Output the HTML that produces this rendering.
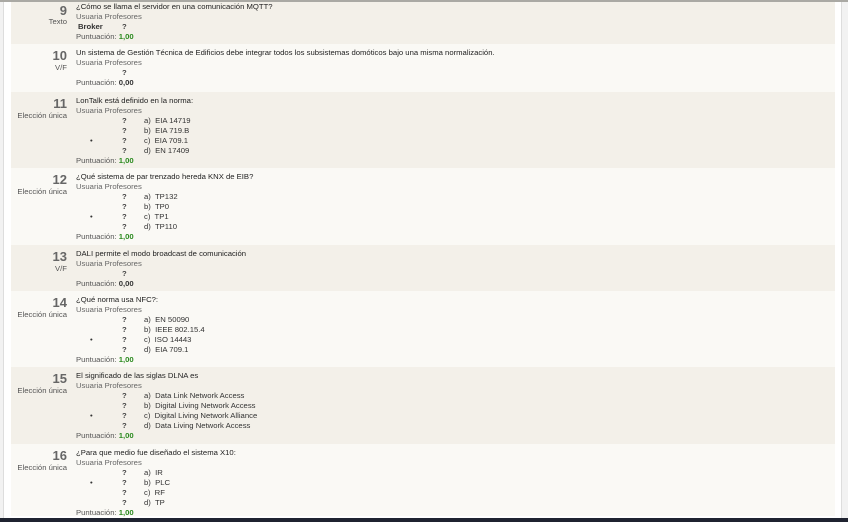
<!DOCTYPE html>
<html><head><meta charset="utf-8"><style>
html,body{margin:0;padding:0}
body{width:848px;height:522px;position:relative;overflow:hidden;background:#fff;font-family:"Liberation Sans",sans-serif;font-size:7.7px;color:#333}
.top{position:absolute;left:0;top:0;width:848px;height:2px;background:#aaa9a4}
.lg{position:absolute;left:0;top:2px;width:3px;height:516px;background:#f2f2f2;border-right:1px solid #ddd}
.rg{position:absolute;left:841px;top:2px;width:7px;height:516px;background:#f2f2f2;border-left:1px solid #ddd}
.bot{position:absolute;left:0;top:518px;width:848px;height:4px;background:#1f2330}
.row{position:absolute;left:11px;width:824px;box-sizing:border-box}
.d{background:#f3f0e9}.l{background:#faf9f5}
.num{position:absolute;left:0;width:56px;text-align:right;font-size:13px;font-weight:bold;color:#666;line-height:14px}
.typ{position:absolute;left:0;width:56px;text-align:right;color:#555;line-height:10px}
.c{position:absolute;left:65px;width:740px;line-height:10px;white-space:nowrap}
.t{color:#222}
.u{color:#666}
.p{color:#555}.p b{color:#2a8a1e}.p b.z{color:#333}
.o{position:relative;height:10px}
.o span,.o b{white-space:nowrap}
.o .b{position:absolute;left:14px}
.o .q{position:absolute;left:46px;font-weight:bold;color:#444}
.o .a{position:absolute;left:68px}
</style></head><body>
<div class="top"></div><div class="lg"></div><div class="rg"></div>

<div class="row d" style="top:2px;height:42px">
<div class="num" style="top:2px">9</div><div class="typ" style="top:15px">Texto</div>
<div class="c" style="top:0px"><div class="t">¿Cómo se llama el servidor en una comunicación MQTT?</div><div class="u">Usuaria Profesores</div>
<div class="o"><b style="position:absolute;left:2px;color:#333">Broker</b><span class="q">?</span></div>
<div class="p">Puntuación: <b>1,00</b></div></div></div>

<div class="row l" style="top:44px;height:48px">
<div class="num" style="top:5px">10</div><div class="typ" style="top:19px">V/F</div>
<div class="c" style="top:4px"><div class="t">Un sistema de Gestión Técnica de Edificios debe integrar todos los subsistemas domóticos bajo una misma normalización.</div><div class="u">Usuaria Profesores</div>
<div class="o"><span class="q">?</span></div>
<div class="p">Puntuación: <b class="z">0,00</b></div></div></div>

<div class="row d" style="top:92px;height:76px">
<div class="num" style="top:5px">11</div><div class="typ" style="top:19px">Elección única</div>
<div class="c" style="top:4px"><div class="t">LonTalk está definido en la norma:</div><div class="u">Usuaria Profesores</div>
<div class="o"><span class="q">?</span><span class="a">a)&nbsp; EIA 14719</span></div>
<div class="o"><span class="q">?</span><span class="a">b)&nbsp; EIA 719.B</span></div>
<div class="o"><span class="b">•</span><span class="q">?</span><span class="a">c)&nbsp; EIA 709.1</span></div>
<div class="o"><span class="q">?</span><span class="a">d)&nbsp; EN 17409</span></div>
<div class="p">Puntuación: <b>1,00</b></div></div></div>

<div class="row l" style="top:168px;height:77px">
<div class="num" style="top:5px">12</div><div class="typ" style="top:19px">Elección única</div>
<div class="c" style="top:4px"><div class="t">¿Qué sistema de par trenzado hereda KNX de EIB?</div><div class="u">Usuaria Profesores</div>
<div class="o"><span class="q">?</span><span class="a">a)&nbsp; TP132</span></div>
<div class="o"><span class="q">?</span><span class="a">b)&nbsp; TP0</span></div>
<div class="o"><span class="b">•</span><span class="q">?</span><span class="a">c)&nbsp; TP1</span></div>
<div class="o"><span class="q">?</span><span class="a">d)&nbsp; TP110</span></div>
<div class="p">Puntuación: <b>1,00</b></div></div></div>

<div class="row d" style="top:245px;height:46px">
<div class="num" style="top:5px">13</div><div class="typ" style="top:19px">V/F</div>
<div class="c" style="top:4px"><div class="t">DALI permite el modo broadcast de comunicación</div><div class="u">Usuaria Profesores</div>
<div class="o"><span class="q">?</span></div>
<div class="p">Puntuación: <b class="z">0,00</b></div></div></div>

<div class="row l" style="top:291px;height:76px">
<div class="num" style="top:5px">14</div><div class="typ" style="top:19px">Elección única</div>
<div class="c" style="top:4px"><div class="t">¿Qué norma usa NFC?:</div><div class="u">Usuaria Profesores</div>
<div class="o"><span class="q">?</span><span class="a">a)&nbsp; EN 50090</span></div>
<div class="o"><span class="q">?</span><span class="a">b)&nbsp; IEEE 802.15.4</span></div>
<div class="o"><span class="b">•</span><span class="q">?</span><span class="a">c)&nbsp; ISO 14443</span></div>
<div class="o"><span class="q">?</span><span class="a">d)&nbsp; EIA 709.1</span></div>
<div class="p">Puntuación: <b>1,00</b></div></div></div>

<div class="row d" style="top:367px;height:77px">
<div class="num" style="top:5px">15</div><div class="typ" style="top:19px">Elección única</div>
<div class="c" style="top:4px"><div class="t">El significado de las siglas DLNA es</div><div class="u">Usuaria Profesores</div>
<div class="o"><span class="q">?</span><span class="a">a)&nbsp; Data Link Network Access</span></div>
<div class="o"><span class="q">?</span><span class="a">b)&nbsp; Digital Living Network Access</span></div>
<div class="o"><span class="b">•</span><span class="q">?</span><span class="a">c)&nbsp; Digital Living Network Alliance</span></div>
<div class="o"><span class="q">?</span><span class="a">d)&nbsp; Data Living Network Access</span></div>
<div class="p">Puntuación: <b>1,00</b></div></div></div>

<div class="row l" style="top:444px;height:72px">
<div class="num" style="top:5px">16</div><div class="typ" style="top:19px">Elección única</div>
<div class="c" style="top:4px"><div class="t">¿Para que medio fue diseñado el sistema X10:</div><div class="u">Usuaria Profesores</div>
<div class="o"><span class="q">?</span><span class="a">a)&nbsp; IR</span></div>
<div class="o"><span class="b">•</span><span class="q">?</span><span class="a">b)&nbsp; PLC</span></div>
<div class="o"><span class="q">?</span><span class="a">c)&nbsp; RF</span></div>
<div class="o"><span class="q">?</span><span class="a">d)&nbsp; TP</span></div>
<div class="p">Puntuación: <b>1,00</b></div></div></div>

<div class="bot"></div>
</body></html>
